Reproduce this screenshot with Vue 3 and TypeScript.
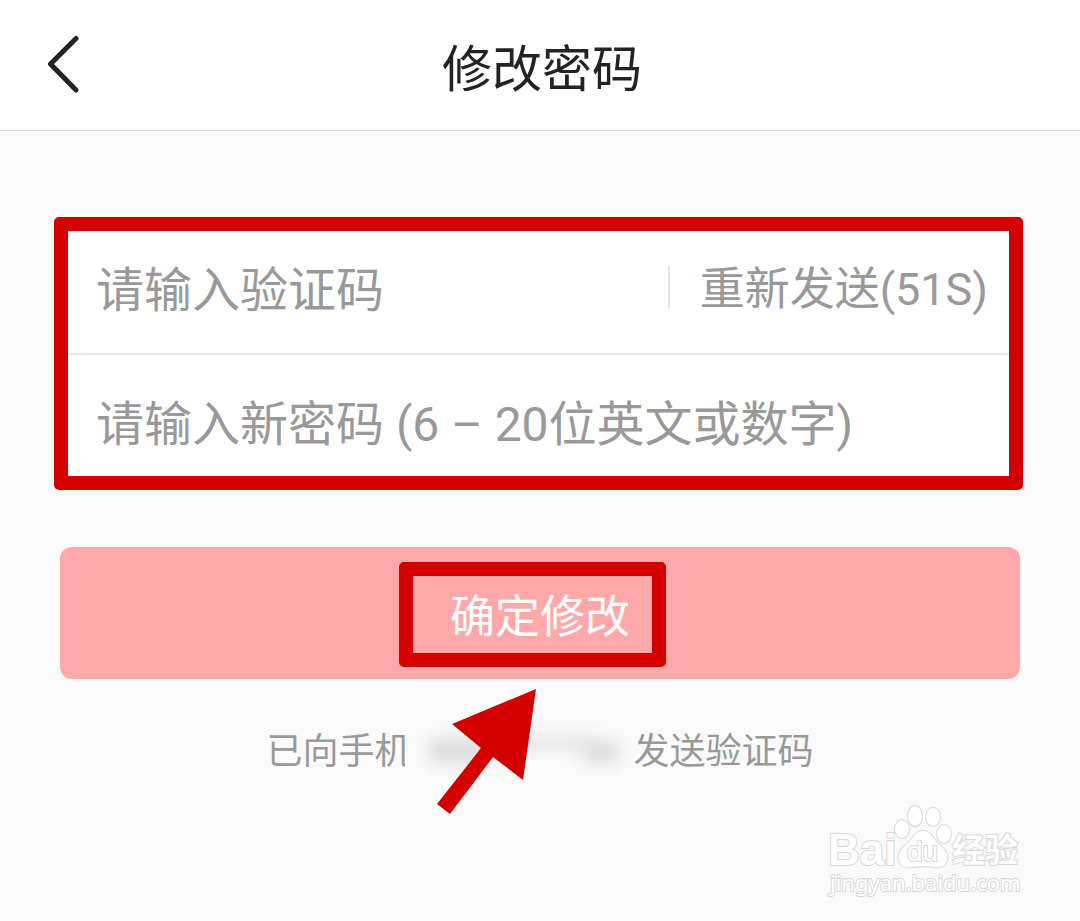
<script setup lang="ts">
import { ref } from 'vue'

const code = ref('')
const password = ref('')
const seconds = ref(51)
</script>

<template>
  <div class="page">
    <header class="bar">
      <button class="back" type="button" aria-label="返回">
        <svg width="36" height="60" viewBox="0 0 36 60" aria-hidden="true">
          <path d="M31 3.5 5.5 29 31 55" />
        </svg>
      </button>
      <h1 class="title">修改密码</h1>
    </header>

    <form class="content" @submit.prevent>
      <div class="card">
        <div class="row">
          <input v-model="code" class="field" type="text" aria-label="验证码" placeholder="请输入验证码" />
          <button class="resend" type="button">重新发送({{ seconds }}S)</button>
        </div>
        <div class="row">
          <input
            v-model="password"
            class="field"
            type="text"
            aria-label="新密码"
            placeholder="请输入新密码 (6 – 20位英文或数字)"
          />
        </div>
        <span class="frame frame-card"></span>
      </div>

      <button class="submit" type="submit">
        确定修改
        <span class="frame frame-submit"></span>
      </button>

      <p class="hint">
        <span class="hint-start">已向手机</span>
        <span class="masked"><i class="smudge wide"></i><i class="smudge thin"></i><i class="smudge end"></i></span>
        <span>发送验证码</span>
        <svg class="arrow" width="100" height="126" viewBox="0 0 100 126" aria-hidden="true">
          <path d="M99 0 15 35 44 59 0 115 13 125 56 68 86 91Z" />
        </svg>
      </p>
    </form>

    <svg class="watermark" width="200" height="96" viewBox="0 0 200 96" aria-label="Baidu经验 jingyan.baidu.com">
      <g class="outlined">
        <text class="brand" x="3" y="64">Bai</text>
        <ellipse cx="77" cy="28" rx="7" ry="9" />
        <ellipse cx="90" cy="15" rx="7" ry="10" />
        <ellipse cx="108" cy="16" rx="7" ry="9" />
        <ellipse cx="119" cy="33" rx="7" ry="9" />
        <path d="M98 30c-8 0-10 8-16 13-7 6-10 10-8 17 2 6 7 7 14 6 7-1 13-1 20 0 7 1 12 0 14-6 2-7-2-11-8-17-6-5-8-13-16-13Z" />
        <text class="du" x="82" y="60">du</text>
        <text class="cjk" x="127" y="61">经验</text>
        <text class="site" x="5" y="90">jingyan.baidu.com</text>
      </g>
    </svg>
  </div>
</template>

<style>
body {
  margin: 0;
  background: #fafafa;
}
</style>

<style scoped>
.page {
  position: relative;
  min-height: 100vh;
  background: #fafafa;
  color: #232323;
  font-family: Roboto, "Noto Sans CJK SC", sans-serif;
}

button,
input {
  border: 0;
  padding: 0;
  background: none;
  font-family: inherit;
}

.bar {
  display: grid;
  grid-template-columns: 90px 1fr 86px;
  align-items: center;
  height: 130px;
  background: #fff;
  border-bottom: 1px solid #dadada;
}

.back {
  display: flex;
  padding-left: 45px;
}

.back path {
  fill: none;
  stroke: #232325;
  stroke-width: 5;
  stroke-linecap: round;
  stroke-linejoin: round;
}

.title {
  margin: 0;
  padding-top: 10px;
  font-size: 50px;
  line-height: 72px;
  font-weight: 400;
  text-align: center;
}

.content {
  padding: 90px 60px 0;
}

.card {
  position: relative;
  background: #fff;
}

.row {
  display: flex;
  align-items: center;
  height: 132px;
  padding: 0 32px 0 36px;
}

.row + .row {
  border-top: 2px solid #e6e6e6;
}

.field {
  flex: 1;
  min-width: 0;
  height: 72px;
  padding-top: 6px;
  font-size: 48px;
  color: #232323;
  outline: none;
}

.field::placeholder {
  color: #999;
  opacity: 1;
}

.resend {
  height: 42px;
  padding: 6px 0 0 30px;
  border-left: 2px solid #e2e2e2;
  color: #999;
  font-size: 45px;
  line-height: 36px;
  white-space: nowrap;
}

.frame {
  position: absolute;
  border: 14px solid #d40000;
  border-radius: 5px;
  pointer-events: none;
}

.frame-card {
  inset: -4px -3px -3px -6px;
}

.submit {
  position: relative;
  display: block;
  width: 100%;
  height: 132px;
  margin-top: 60px;
  border-radius: 12px;
  background: #ffa8aa;
  color: #fff;
  font-size: 45px;
  font-weight: 400;
}

.frame-submit {
  inset: 15px calc(50% - 126px) 12px calc(50% - 141px);
}

.hint {
  position: relative;
  display: flex;
  justify-content: center;
  margin: 49px 0 0;
  color: #999;
  font-size: 36px;
  line-height: 48px;
}

.hint-start {
  width: 139px;
  white-space: nowrap;
}

.masked {
  position: relative;
  width: 228px;
  background: #fafafa;
}

.smudge {
  position: absolute;
  border-radius: 12px;
  background: #dedede;
  filter: blur(8px);
}

.smudge.wide {
  left: 22px;
  top: 10px;
  width: 66px;
  height: 26px;
}

.smudge.thin {
  left: 110px;
  top: 10px;
  width: 76px;
  height: 10px;
}

.smudge.end {
  left: 176px;
  top: 12px;
  width: 40px;
  height: 24px;
}

.arrow {
  position: absolute;
  left: calc(50% - 103px);
  top: -39px;
  fill: #d40000;
}

.watermark {
  position: absolute;
  right: 55px;
  bottom: 24px;
  overflow: visible;
}

.outlined {
  fill: #fff;
  stroke: #d8d8d8;
  stroke-width: 2;
  paint-order: stroke;
}

.brand {
  font: 700 44px "Liberation Sans", sans-serif;
}

.du {
  font: 400 28px "Liberation Sans", sans-serif;
}

.cjk {
  font: 700 33px "Noto Sans CJK SC", sans-serif;
}

.site {
  font: 400 22px "Noto Sans", sans-serif;
}
</style>
